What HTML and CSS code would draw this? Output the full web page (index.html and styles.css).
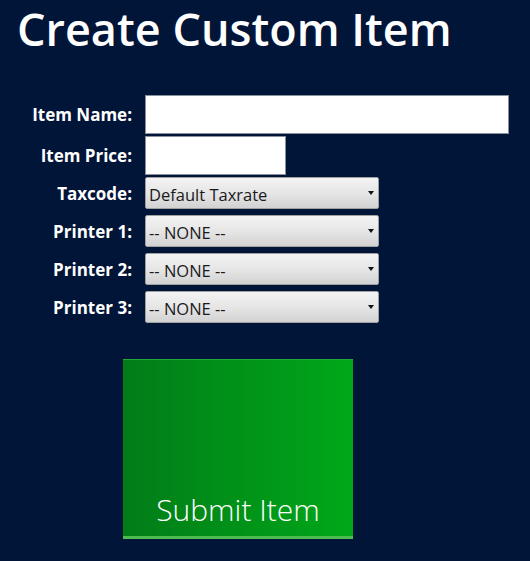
FILE: index.html
```html
<!doctype html>
<html lang="en">
    <head>
        <title>Create Custom Item</title>
        <link rel="stylesheet" href="styles.css">
    </head>
    <body>
        <h1 class="title">Create Custom Item</h1>
        <form class="item-form">
            <div class="row row-input">
                <label class="field-label" for="item-name">Item Name:</label>
                <input class="text-input wide" id="item-name" type="text">
            </div>
            <div class="row row-input">
                <label class="field-label" for="item-price">Item Price:</label>
                <input class="text-input narrow" id="item-price" type="text">
            </div>
            <div class="row row-select">
                <label class="field-label" for="taxcode">Taxcode:</label>
                <div class="select-wrap">
                    <select class="dropdown" id="taxcode">
                        <option>Default Taxrate</option>
                    </select>
                </div>
            </div>
            <div class="row row-select">
                <label class="field-label" for="printer1">Printer 1:</label>
                <div class="select-wrap">
                    <select class="dropdown" id="printer1">
                        <option>-- NONE --</option>
                    </select>
                </div>
            </div>
            <div class="row row-select">
                <label class="field-label" for="printer2">Printer 2:</label>
                <div class="select-wrap">
                    <select class="dropdown" id="printer2">
                        <option>-- NONE --</option>
                    </select>
                </div>
            </div>
            <div class="row row-select">
                <label class="field-label" for="printer3">Printer 3:</label>
                <div class="select-wrap">
                    <select class="dropdown" id="printer3">
                        <option>-- NONE --</option>
                    </select>
                </div>
            </div>
            <button class="submit-tile" type="button">Submit Item</button>
        </form>
    </body>
</html>
```

FILE: styles.css
```css
body {
    margin: 0;
    padding: 0;
    background: #011538;
    color: white;
    font-family: "Open Sans", "DejaVu Sans", sans-serif;
    overflow: hidden;
}

.title {
    margin: 0;
    padding: 0 0 0 17px;
    height: 95px;
    font-size: 45px;
    font-weight: 600;
    line-height: 58px;
}

.item-form {
    display: flex;
    flex-direction: column;
}

.row {
    display: flex;
    align-items: center;
}

.row-input {
    height: 39px;
    margin-bottom: 2px;
}

.row-select {
    height: 32px;
    margin-bottom: 6px;
}

.field-label {
    width: 132px;
    margin-right: 13px;
    text-align: right;
    font-size: 17px;
    font-weight: 700;
}

.text-input {
    box-sizing: border-box;
    height: 39px;
    border: 1px solid #8a8f9c;
    background: white;
    margin: 0;
}

.wide {
    width: 364px;
}

.narrow {
    width: 141px;
}

.select-wrap {
    position: relative;
    width: 234px;
    height: 32px;
}

.select-wrap::after {
    content: "";
    position: absolute;
    right: 5px;
    top: 14px;
    border-left: 3px solid transparent;
    border-right: 3px solid transparent;
    border-top: 4px solid #111;
}

.dropdown {
    -webkit-appearance: none;
    appearance: none;
    box-sizing: border-box;
    width: 234px;
    height: 32px;
    margin: 0;
    padding: 2px 0 0 3px;
    border: 1px solid #a0a0a0;
    border-radius: 2px;
    background: linear-gradient(#f3f3f3, #e6e6e6 50%, #d2d2d2);
    color: #1a1a1a;
    font-family: "Open Sans", "DejaVu Sans", sans-serif;
    font-size: 16.5px;
}

.submit-tile {
    width: 230px;
    height: 180px;
    margin: 30px 0 0 123px;
    padding: 0 0 9px;
    border: none;
    display: flex;
    align-items: flex-end;
    justify-content: center;
    background: linear-gradient(to right, #017c18, #00a819);
    box-shadow: inset 0 -3px 0 #4dbb4d, inset 0 1px 0 #1fa838;
    color: white;
    font-family: "Open Sans", "DejaVu Sans", sans-serif;
    font-size: 30px;
    font-weight: 300;
}
```
